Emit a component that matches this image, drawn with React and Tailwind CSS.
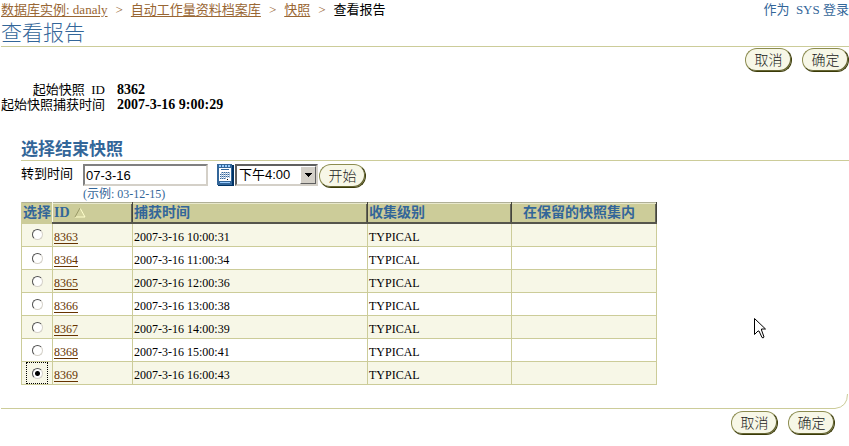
import { useState } from 'react';

const snapshots = [
  { id: '8363', time: '2007-3-16 10:00:31', level: 'TYPICAL' },
  { id: '8364', time: '2007-3-16 11:00:34', level: 'TYPICAL' },
  { id: '8365', time: '2007-3-16 12:00:36', level: 'TYPICAL' },
  { id: '8366', time: '2007-3-16 13:00:38', level: 'TYPICAL' },
  { id: '8367', time: '2007-3-16 14:00:39', level: 'TYPICAL' },
  { id: '8368', time: '2007-3-16 15:00:41', level: 'TYPICAL' },
  { id: '8369', time: '2007-3-16 16:00:43', level: 'TYPICAL' },
];

function PillButton({ children }) {
  return (
    <button
      type="button"
      className="h-6 w-[47px] shrink-0 rounded-full border border-[#8c8c50] border-r-[#3a3a08] border-b-[#3a3a08] bg-[#f7f7e7] pt-px text-center text-[14px] leading-5 font-light text-[#222] shadow-[inset_-1px_-1px_0_#666633]"
    >
      {children}
    </button>
  );
}

function ActionButtons() {
  return (
    <div className="flex justify-end gap-2.5">
      <PillButton>取消</PillButton>
      <PillButton>确定</PillButton>
    </div>
  );
}

function Crumb({ children }) {
  return (
    <>
      <a href="#" className="text-[#996633] underline underline-offset-2">{children}</a>
      <span className="px-2 text-[#996633]">&gt;</span>
    </>
  );
}

function CalendarIcon() {
  return (
    <svg width="18" height="22" viewBox="0 0 18 22" shapeRendering="crispEdges" aria-hidden="true">
      <path d="M0 0h15v21H0z" fill="#336699" />
      <path d="M15 1h2v21H1v-1h14z" fill="#003366" />
      <path d="M2 1h2v2H2zM5 1h2v2H5zM8 1h2v2H8zM11 1h2v2h-2z" fill="#99ccff" />
      <path d="M2 4h12v13H2z" fill="#fff" />
      <path d="M4 5h8v1H4z" fill="#336699" />
      <path
        d="M5 8h1v1H5zM7 8h1v1H7zM9 8h1v1H9zM11 8h1v1h-1zM3 10h1v1H3zM5 10h1v1H5zM7 10h1v1H7zM9 10h1v1H9zM11 10h1v1h-1zM3 12h1v1H3zM5 12h1v1H5zM7 12h1v1H7zM9 12h1v1H9zM11 12h1v1h-1zM3 14h1v1H3zM5 14h1v1H5zM7 14h1v1H7z"
        fill="#336699"
      />
      <path
        d="M4 8h1v7H4zM6 8h1v7H6zM8 8h1v7H8zM10 8h1v6h-1zM12 8h1v6h-1z"
        fill="#a9c1da"
      />
      <path d="M10 15h1v1h-1z" fill="#000" />
      <path d="M3 18h10v1H3z" fill="#99ccff" />
    </svg>
  );
}

function SortIcon() {
  return (
    <svg width="12" height="11" viewBox="0 0 12 11" className="ml-1 inline-block align-[-1px]" aria-hidden="true">
      <path d="M6 1L1 10h10z" fill="#d2d29e" />
      <path d="M6 1l5 9H1" stroke="#ffffcc" fill="none" />
      <path d="M6 1L1 10" stroke="#999966" fill="none" />
    </svg>
  );
}

function MouseCursor() {
  return (
    <svg width="12" height="21" viewBox="0 0 12 21" className="absolute top-[318px] left-[754px]" aria-hidden="true">
      <path
        d="M.5.5v16l3.500-3.500h1l3 6.500q1.500 1 2-.5L7.500 12v-1h4z"
        fill="#fff"
        stroke="#000"
      />
    </svg>
  );
}

// raised header cell: light top, dark right and bottom edges
const headCell =
  'border-r border-b-2 border-r-[#44443a] border-b-[#55554c] px-px pt-px pb-0 text-left leading-[18px] font-bold shadow-[inset_0_1px_0_#e8e8cc,inset_-1px_0_0_#66665a]';

const bodyCell = 'border border-[#cccc99] px-px pt-1 pb-0 leading-[18px]';

export default function App() {
  const [selected, setSelected] = useState('8369');

  return (
    <div className="relative bg-white pl-px font-['Liberation_Serif','Noto_Sans_CJK_SC',serif] text-[13px] text-black">
      <header className="border-b border-[#cccc99]">
        <div className="flex h-5 items-center justify-between leading-5">
          <nav className="whitespace-nowrap">
            <Crumb>数据库实例: danaly</Crumb>
            <Crumb>自动工作量资料档案库</Crumb>
            <Crumb>快照</Crumb>
            <span>查看报告</span>
          </nav>
          <div className="whitespace-pre text-[#336699]">作为  SYS 登录</div>
        </div>
        <h1 className="h-[26px] text-[21px] leading-[26px] font-light text-[#336699]">查看报告</h1>
      </header>

      <div className="pt-px">
        <ActionButtons />
      </div>

      <dl className="mt-[10px] grid grid-cols-[104px_1fr] gap-x-3 leading-[15px]">
        <dt className="text-right whitespace-pre">起始快照  ID</dt>
        <dd className="text-[14px] font-bold">8362</dd>
        <dt className="text-right whitespace-nowrap">起始快照捕获时间</dt>
        <dd className="text-[14px] font-bold">2007-3-16 9:00:29</dd>
      </dl>

      <section className="mt-[27px] pl-5">
        <h2 className="border-b border-[#cccc99] text-[17px] leading-[21px] font-bold text-[#336699]">选择结束快照</h2>

        <div className="flex pt-[3px]">
          <label htmlFor="goto-time" className="w-[62px] shrink-0 leading-5">转到时间</label>
          <div>
            <input
              id="goto-time"
              type="text"
              defaultValue="07-3-16"
              className="block h-[22px] w-[125px] rounded-none border-2 border-[#d4d0c8] border-t-[#808080] border-l-[#808080] px-px font-['Liberation_Sans',sans-serif] text-[13px] outline-none"
            />
            <div className="pt-px text-[12px] leading-[15px] text-[#336699]">(示例: 03-12-15)</div>
          </div>
          <button type="button" aria-label="日历" className="ml-[9px] block h-[22px] w-[18px]">
            <CalendarIcon />
          </button>
          <div className="relative mr-px h-[22px] w-[83px]">
            <select
              aria-label="时间"
              defaultValue="16"
              className="h-[22px] w-full appearance-none rounded-none border-2 border-[#d4d0c8] border-t-[#606060] border-l-[#606060] bg-white pl-0.5 font-['Liberation_Sans','Noto_Sans_CJK_SC',sans-serif] text-[13px] leading-[18px] outline-none"
            >
              <option value="16">下午4:00</option>
            </select>
            <span className="pointer-events-none absolute top-0.5 right-0.5 flex h-[18px] w-4 items-center justify-center border border-white border-r-[#606060] border-b-[#606060] bg-[#d4d0c8]">
              <svg width="7" height="4" viewBox="0 0 7 4" shapeRendering="crispEdges" aria-hidden="true">
                <path d="M0 0h7v1H0zM1 1h5v1H1zM2 2h3v1H2zM3 3h1v1H3z" />
              </svg>
            </span>
          </div>
          <PillButton>开始</PillButton>
        </div>

        <table className="w-[635px] table-fixed border-collapse">
          <colgroup>
            <col className="w-[31px]" />
            <col className="w-20" />
            <col className="w-[235px]" />
            <col className="w-36" />
            <col className="w-[145px]" />
          </colgroup>
          <thead>
            <tr className="border-t border-[#b0b098] bg-[#cccc99] text-[14px] text-[#336699]">
              <th className="border-r border-l border-l-[#cccc99] border-r-[#f7f7e7] p-0 text-center leading-[18px] font-bold">选择</th>
              <th className={headCell}>ID<SortIcon /></th>
              <th className={headCell}>捕获时间</th>
              <th className={headCell}>收集级别</th>
              <th className={headCell}><span className="pl-2.5">在保留的快照集内</span></th>
            </tr>
          </thead>
          <tbody className="text-[12px]">
            {snapshots.map((s) => (
              <tr key={s.id} className="h-[23px] odd:bg-[#f7f7e7]">
                <td className="border border-[#cccc99] p-0">
                  <label
                    className={
                      s.id === selected
                        ? 'mx-auto flex h-[22px] w-[22px] items-center justify-center border border-dotted border-black'
                        : 'mx-auto flex h-[22px] w-[22px] items-center justify-center'
                    }
                  >
                    <input
                      type="radio"
                      name="snapshot"
                      aria-label={s.id}
                      checked={s.id === selected}
                      onChange={() => setSelected(s.id)}
                      className="m-0 h-[11px] w-[11px] appearance-none rounded-full border border-[#d4d0c8] border-t-[#505050] border-l-[#505050] bg-white checked:bg-[radial-gradient(circle,#000_2px,#fff_3px)]"
                    />
                  </label>
                </td>
                <td className={bodyCell}>
                  <a href="#" className="text-[#663300] underline underline-offset-2">{s.id}</a>
                </td>
                <td className={bodyCell}>{s.time}</td>
                <td className={bodyCell}>{s.level}</td>
                <td className={bodyCell} />
              </tr>
            ))}
          </tbody>
        </table>
      </section>

      <footer className="mt-[9px]">
        <div className="flex items-end pr-px">
          <div className="h-px flex-1 bg-[#cccc99]" />
          <svg width="13" height="15" viewBox="0 0 13 15" aria-hidden="true">
            <path d="M0 14.500Q12.500 13 12.500 0" fill="none" stroke="#cccc99" />
          </svg>
        </div>
        <div className="pt-0.5 pr-3.5">
          <ActionButtons />
        </div>
      </footer>

      <MouseCursor />
    </div>
  );
}
